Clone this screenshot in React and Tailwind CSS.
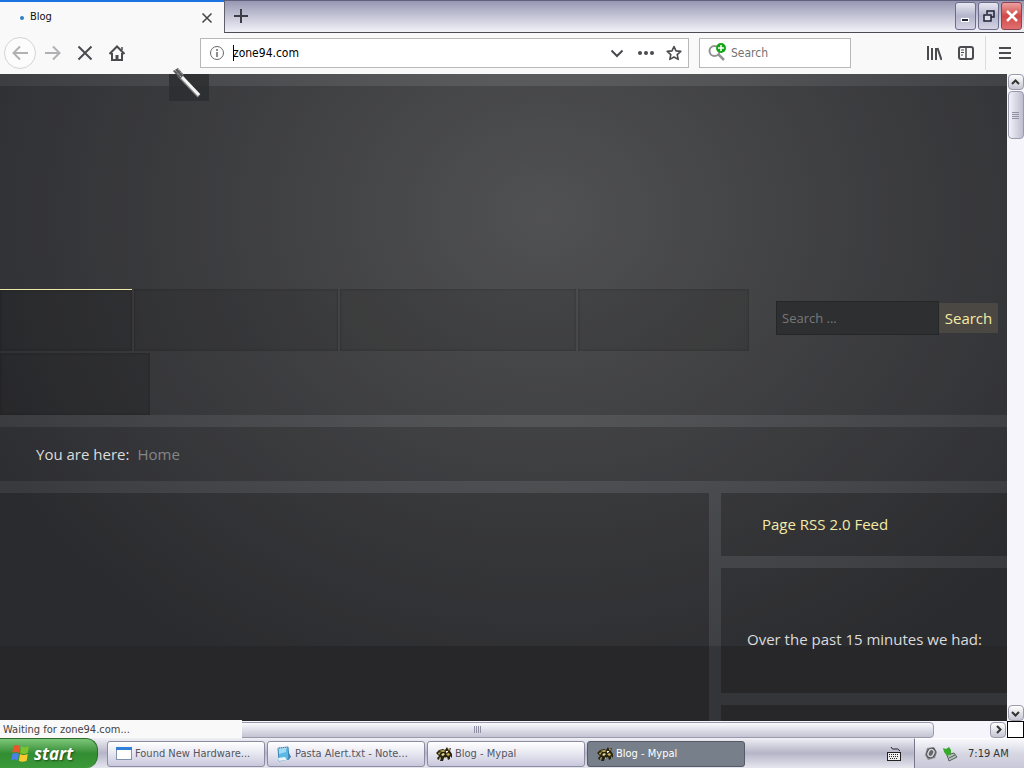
import React from "react";

const navItems = [
  { id: "home", className: "w-[132px] border-t border-[#efe9a8] bg-black/15" },
  { id: "two", className: "w-[204px] bg-black/10" },
  { id: "three", className: "w-[236px] bg-black/10" },
  { id: "four", className: "w-[171px] bg-black/10" },
  { id: "five", className: "w-[150px] bg-black/15" },
];

const tasks = [
  { title: "Found New Hardware...", icon: WindowIcon },
  { title: "Pasta Alert.txt - Note...", icon: NotepadIcon },
  { title: "Blog - Mypal", icon: MypalIcon },
  { title: "Blog - Mypal", icon: MypalIcon, active: true },
];

function WindowIcon() {
  return (
    <svg className="h-4 w-4 shrink-0" viewBox="0 0 16 16">
      <rect x="0.5" y="1.5" width="15" height="12" fill="#fff" stroke="#7f93ad" />
      <rect x="0" y="1" width="16" height="3" fill="#2f7fd8" />
    </svg>
  );
}

function NotepadIcon() {
  return (
    <svg className="h-4 w-4 shrink-0" viewBox="0 0 16 16">
      <path d="M11 3l4 8-3 3z" fill="#4a78a8" />
      <path d="M2 2l10-1 1 12-10 2z" fill="#5cb8e4" stroke="#3d86b4" />
      <path d="M3 3l7-1v4L3 8z" fill="#9fdcf4" />
      <path d="M2 12l7-1 2 3-8 1z" fill="#e9f4fa" />
      <path d="M2 2h10" stroke="#d8e4ee" strokeDasharray="1 1" />
    </svg>
  );
}

function MypalIcon() {
  return (
    <svg className="h-4 w-4 shrink-0" viewBox="0 0 16 16">
      <path d="M0 7l3-3 4-1 2 1 2-3 1 2 3-1-1 3 2 3v4l-2-2v3l-2 1-1-3-3 1-1 3H4l1-3-3 2-1-2 2-2z" fill="#28240f" />
      <path d="M3 5l4-1 3 1-3 1zM2 7l3-1-2 3zM12 3l2 0-1 2zM10 8l3-1 1 2-2 1z" fill="#c9b35a" />
      <path d="M5 9l2-2 2 1-2 2zM3 12l2-1-1 2zM8 12l1-1v2z" fill="#e6d99a" />
      <path d="M10 5l2 0 0 1-2 1z" fill="#fff" />
    </svg>
  );
}

function WindowsFlag() {
  return (
    <svg className="h-5 w-5" viewBox="0 0 18 18">
      <path d="M3 2q3-2 6 0L8 8Q5 6 2 8z" fill="#e8562a" />
      <path d="M10 2q3 2 7 0l-1 6q-4 2-7 0z" fill="#7cc22c" />
      <path d="M2 9q3-2 6 0l-1 6q-3-2-6 0z" fill="#4a82e4" />
      <path d="M9 9q3 2 7 0l-1 6q-4 2-7 0z" fill="#f8ca30" />
    </svg>
  );
}

function Chevron({ d }) {
  return (
    <svg className="h-[9px] w-[9px]" viewBox="0 0 9 9" fill="none" stroke="#333" strokeWidth="2">
      <path d={d} />
    </svg>
  );
}

function ScrollButton({ label, d }) {
  return (
    <button
      aria-label={label}
      className="flex h-4 w-4 shrink-0 items-center justify-center rounded-sm border border-[#9a9aaa] bg-linear-to-b from-white to-[#c6c6d4]"
    >
      <Chevron d={d} />
    </button>
  );
}

function WindowButton({ label, className, children }) {
  return (
    <button
      aria-label={label}
      className={`flex h-7 w-[21px] items-center justify-center rounded-[3px] border ${className}`}
    >
      <svg className="h-4 w-4" viewBox="0 0 16 16" fill="none">
        {children}
      </svg>
    </button>
  );
}

function TabStrip() {
  return (
    <div className="flex h-[33px] shrink-0 bg-linear-to-b from-[#9494b0] via-[#c6c6d8] to-[#f4f4fa]">
      <div className="flex w-[224px] items-center border-t-2 border-[#1a73e0] bg-[#f9f9fa] pr-[11px] pl-5">
        <span className="h-1 w-1 rounded-full bg-[#2f7fc4]" />
        <span className="ml-[6px] flex-1 text-[11px] text-[#111]">Blog</span>
        <button aria-label="Close tab">
          <svg className="h-3 w-3" viewBox="0 0 12 12" stroke="#444" strokeWidth="1.5">
            <path d="M1.5 1.5l9 9M10.5 1.5l-9 9" />
          </svg>
        </button>
      </div>
      <div className="flex flex-1 justify-between border-t border-b border-l border-t-[#60607f] border-b-[#4c4c54] border-l-[#60606c]">
        <button aria-label="New tab" className="flex w-8 items-center justify-center pb-[2px]">
          <svg className="h-[14px] w-[14px]" viewBox="0 0 14 14" stroke="#3c3c44" strokeWidth="2">
            <path d="M7 0v14M0 7h14" />
          </svg>
        </button>
        <div className="flex gap-[2px] pt-px pr-[2px]">
          <WindowButton label="Minimize" className="border-[#6c6c8c] bg-linear-to-b from-[#e8e8f2] via-[#b4b4cc] to-[#d4d4e4]">
            <path d="M3 12h8" stroke="#fff" strokeWidth="4" />
            <path d="M4 12h6" stroke="#222236" strokeWidth="2" />
          </WindowButton>
          <WindowButton label="Restore" className="border-[#6c6c8c] bg-linear-to-b from-[#e8e8f2] via-[#b4b4cc] to-[#d4d4e4]">
            <path d="M6 6V3h7v6h-3" stroke="#222236" strokeWidth="1.5" />
            <path d="M3 7h7v6H3z" fill="#dedeec" stroke="#222236" strokeWidth="1.5" />
          </WindowButton>
          <WindowButton label="Close" className="border-[#8c4450] bg-linear-to-b from-[#eaa0a0] via-[#d04848] to-[#e07070]">
            <path d="M3 3l10 10M13 3L3 13" stroke="#fff" strokeWidth="2.5" />
          </WindowButton>
        </div>
      </div>
    </div>
  );
}

function ToolbarIcon({ label, children, className = "" }) {
  return (
    <button aria-label={label} className={`flex shrink-0 items-center justify-center ${className}`}>
      <svg className="h-4 w-4" viewBox="0 0 16 16" fill="none" stroke="#4a4a4f" strokeWidth="2">
        {children}
      </svg>
    </button>
  );
}

function Toolbar() {
  return (
    <div className="flex h-[41px] shrink-0 items-center bg-[#f9f9fa] pb-[2px]">
      <div className="flex w-[200px] items-center pl-1">
        <button
          aria-label="Back"
          className="flex h-8 w-8 items-center justify-center rounded-full border border-[#d4d4d6] bg-[#fcfcfc]"
        >
          <svg className="h-4 w-4" viewBox="0 0 16 16" fill="none" stroke="#b1b1b3" strokeWidth="2">
            <path d="M16 8H2M8 1.5L1.5 8 8 14.5" />
          </svg>
        </button>
        <button aria-label="Forward" className="ml-[9px]">
          <svg className="h-4 w-4" viewBox="0 0 16 16" fill="none" stroke="#b1b1b3" strokeWidth="2">
            <path d="M0 8h14M8 1.5L14.5 8 8 14.5" />
          </svg>
        </button>
        <ToolbarIcon label="Stop" className="ml-4">
          <path d="M1.5 1.5l13 13M14.5 1.5l-13 13" />
        </ToolbarIcon>
        <ToolbarIcon label="Home" className="ml-4">
          <path d="M0.5 9L8 1.5 15.5 9" />
          <path d="M3 8v7h10V8" />
          <path d="M8 15v-5" strokeWidth="3" />
          <path d="M13 5V2" strokeWidth="1.5" />
        </ToolbarIcon>
      </div>

      <div className="flex h-[30px] flex-1 items-center border border-[#b8b8ba] bg-white pr-[6px] pl-2">
        <svg className="h-4 w-4 shrink-0" viewBox="0 0 16 16" fill="none" stroke="#68686c">
          <circle cx="8" cy="8" r="6.5" />
          <path d="M8 7v5M8 4v2" strokeWidth="1.5" />
        </svg>
        <div className="relative ml-2 flex min-w-0 flex-1">
          <span className="absolute top-0 left-0 h-4 w-px bg-black" />
          <input
            aria-label="Address"
            type="text"
            defaultValue="zone94.com"
            className="h-4 w-full bg-transparent text-[12px] text-black outline-none"
          />
        </div>
        <ToolbarIcon label="Show history">
          <path d="M2.5 5.5L8 11l5.5-5.5" />
        </ToolbarIcon>
        <ToolbarIcon label="Page actions" className="ml-[13px]">
          <g fill="#4a4a4f" stroke="none">
            <circle cx="2" cy="8" r="2" />
            <circle cx="8" cy="8" r="2" />
            <circle cx="14" cy="8" r="2" />
          </g>
        </ToolbarIcon>
        <ToolbarIcon label="Bookmark" className="ml-3">
          <path
            d="M8 1.5l2 4.4 4.8.5-3.6 3.2 1 4.8L8 12l-4.2 2.4 1-4.8L1.2 6.4l4.8-.5z"
            strokeWidth="1.6"
            strokeLinejoin="round"
          />
        </ToolbarIcon>
      </div>

      <div className="ml-[10px] flex h-[30px] w-[152px] items-center border border-[#b8b8ba] bg-white pl-2">
        <svg className="h-5 w-5 shrink-0" viewBox="0 0 20 20" fill="none">
          <circle cx="6.5" cy="8" r="5" stroke="#929292" strokeWidth="2" />
          <path d="M10 11l6 6" stroke="#929292" strokeWidth="2.5" />
          <circle cx="13" cy="5" r="5" fill="#14a514" />
          <path d="M13 2v6M10 5h6" stroke="#fff" strokeWidth="1.5" />
        </svg>
        <input
          aria-label="Search the web"
          type="text"
          placeholder="Search"
          className="ml-[3px] w-full min-w-0 bg-transparent text-[12px] outline-none placeholder:text-[#737373]"
        />
      </div>

      <div className="flex w-[173px] items-center justify-end pr-[11px]">
        <ToolbarIcon label="Library">
          <path d="M2 1v14M6 3v12M10 3v12M11.5 3l4 12" />
        </ToolbarIcon>
        <ToolbarIcon label="Sidebars" className="ml-4">
          <rect x="1" y="2" width="14" height="12" rx="2" />
          <path d="M8 2v12" strokeWidth="1.5" />
          <path d="M3 5h3M3 7.5h3M3 10h2" strokeWidth="1" />
        </ToolbarIcon>
        <span className="ml-[11px] h-[34px] w-px bg-[#dcdcde]" />
        <ToolbarIcon label="Menu" className="ml-[11px]">
          <path d="M2 3h12M2 8h12M2 13h12" />
        </ToolbarIcon>
      </div>
    </div>
  );
}

function BlogPage() {
  return (
    <div
      className="flex min-w-0 flex-1 flex-col gap-3 overflow-hidden bg-[#343539] bg-[radial-gradient(ellipse_620px_520px_at_54%_140px,#656668_0%,#57585a_30%,#4b4c4f_56%,#404145_84%,#393a3e_100%)] bg-[length:100%_572px] bg-no-repeat pt-3 text-[15px] text-[#dcdcdc]"
      style={{ fontFamily: '"Open Sans", "Noto Sans", sans-serif' }}
    >
      <header className="flex h-[329px] shrink-0 items-start bg-black/20 pt-[203px]">
        <nav className="flex min-w-0 flex-1 flex-wrap gap-[2px]">
          {navItems.map((item) => (
            <a
              key={item.id}
              href={`#${item.id}`}
              aria-label={item.id}
              className={`h-[62px] shadow-[inset_0_0_3px_rgba(0,0,0,0.25)] ${item.className}`}
            />
          ))}
        </nav>
        <form className="mt-3 mr-[9px] ml-[27px] flex w-[222px] items-center">
          <input
            aria-label="Search"
            type="search"
            placeholder="Search ..."
            className="h-[34px] min-w-0 flex-1 border border-[#252628] bg-[#2e2f31] px-[5px] text-[13px] outline-none placeholder:text-[#77787a]"
          />
          <button type="button" className="h-[30px] w-[59px] bg-[#4b4844] text-[#f5eba6]">
            Search
          </button>
        </form>
      </header>

      <div className="flex h-[54px] shrink-0 items-center gap-2 bg-black/20 pl-9">
        <span>You are here:</span>
        <a href="#home" className="text-[#858688]">Home</a>
      </div>

      <div className="flex min-h-0 flex-1 gap-3">
        <main className="flex-1 bg-black/25" />
        <aside className="flex w-[286px] flex-col gap-3">
          <section className="flex h-[63px] shrink-0 items-center bg-black/25 pl-[41px]">
            <a href="#rss" className="text-[#f3eaa8]">Page RSS 2.0 Feed</a>
          </section>
          <section className="h-[125px] shrink-0 bg-black/25 pt-[60px] pl-[26px]">
            <p className="leading-[22px] whitespace-nowrap">Over the past 15 minutes we had:</p>
          </section>
          <section className="flex-1 bg-black/25" />
        </aside>
      </div>
    </div>
  );
}

function VerticalScrollbar() {
  return (
    <div className="flex w-[17px] shrink-0 flex-col items-center justify-between bg-[#f5f5fb]">
      <div className="flex flex-col gap-px">
        <ScrollButton label="Scroll up" d="M1 6l3.5-3.5L8 6" />
        <div className="flex h-12 w-4 flex-col items-center justify-center gap-px rounded-sm border border-[#9a9aac] bg-linear-to-r from-[#f2f2fa] to-[#bdbdcf]">
          <span className="h-px w-[7px] bg-[#9090a4]" />
          <span className="h-px w-[7px] bg-[#9090a4]" />
          <span className="h-px w-[7px] bg-[#9090a4]" />
          <span className="h-px w-[7px] bg-[#9090a4]" />
        </div>
      </div>
      <ScrollButton label="Scroll down" d="M1 3l3.5 3.5L8 3" />
    </div>
  );
}

function HorizontalScrollbar() {
  return (
    <div className="relative flex h-[17px] shrink-0 items-center bg-[#f5f5fb]">
      <div className="mr-14 flex h-4 flex-1 items-center justify-center gap-px rounded-sm border border-[#9a9aac] bg-linear-to-b from-[#fafaff] to-[#c3c3d3] pl-5">
        <span className="h-[7px] w-px bg-[#9090a4]" />
        <span className="h-[7px] w-px bg-[#9090a4]" />
        <span className="h-[7px] w-px bg-[#9090a4]" />
        <span className="h-[7px] w-px bg-[#9090a4]" />
      </div>
      <ScrollButton label="Scroll right" d="M3 1l3.5 3.5L3 8" />
      <span className="ml-px h-[17px] w-[17px] border border-black bg-white" />
      <div className="absolute bottom-0 left-0 flex h-[18px] w-[242px] items-center bg-[#f9f9fa] pt-[2px] pl-[3px] text-[11px] text-[#444]">
        Waiting for zone94.com...
      </div>
    </div>
  );
}

function Taskbar() {
  return (
    <div className="flex h-[30px] shrink-0 bg-linear-to-b from-[#f0f0f6] via-[#b5b5c8] to-[#e6e6ee]">
      <button
        className="flex w-[98px] items-center gap-1 rounded-r-xl border-t border-r border-[#2d6c2c] bg-linear-to-b from-[#7cc67a] via-[#338d32] to-[#3c9a3a] pl-[10px] text-[17px] font-bold text-white italic [text-shadow:1px_1px_2px_#1c4a1b]"
        style={{ fontFamily: '"Open Sans", "Noto Sans", sans-serif' }}
      >
        <WindowsFlag />
        start
      </button>
      <div className="ml-[9px] flex flex-1 items-center gap-[2px] pt-px">
        {tasks.map((task, i) => (
          <button
            key={i}
            className={`flex h-[26px] w-[158px] items-center gap-[3px] rounded-[3px] border pt-px pr-1 text-[11px] whitespace-nowrap ${
              task.active
                ? "border-[#555a66] bg-[#77808a] pl-[9px] text-white"
                : "border-[#8c8ca4] bg-linear-to-b from-white via-[#e6e6f0] to-[#c8c8dc] pl-2 text-[#555560]"
            }`}
          >
            <task.icon />
            {task.title}
          </button>
        ))}
      </div>
      <svg className="mt-2 mr-3 h-4 w-4" viewBox="0 0 16 16" fill="none" stroke="#222">
        <path d="M5 1q1 3 4 2t5 2" />
        <rect x="1.5" y="6.5" width="13" height="8" fill="#eee" />
        <path d="M3 8.5h10M3 10.5h10M4 12.5h8" strokeDasharray="1 1" />
      </svg>
      <div className="flex w-[110px] items-center gap-[3px] border-t border-l border-t-white border-l-[#77778c] bg-linear-to-b from-[#f8f8fc] via-[#d8d8e4] to-[#c8c8d8] pl-2 text-[11px] text-[#333]">
        <svg className="h-4 w-4" viewBox="0 0 16 16">
          <path d="M4 2l7-1 3 5-2 6-7 2-3-5z" fill="#88898e" />
          <ellipse cx="8" cy="7" rx="4" ry="5" fill="#d6d6da" stroke="#44454a" transform="rotate(25 8 7)" />
          <ellipse cx="8" cy="7" rx="2" ry="3" fill="#66676c" transform="rotate(25 8 7)" />
        </svg>
        <svg className="h-4 w-4" viewBox="0 0 16 16">
          <path d="M5 9l7-2 3 4-8 4z" fill="#b4c0bc" stroke="#55605c" />
          <path d="M7 12l6-3" stroke="#55605c" />
          <path d="M1 2l3 1 3-2 2 3v4l-4 2-3-4z" fill="#38a92c" />
        </svg>
        <span className="ml-[7px] pt-px">7:19 AM</span>
      </div>
    </div>
  );
}

function BrushCursor() {
  return (
    <div className="pointer-events-none absolute top-[66px] left-[169px] h-[35px] w-10">
      <div className="mt-2 h-[27px] bg-[#2c2e30]/85" />
      <svg className="absolute inset-0 h-[35px] w-10" viewBox="0 0 40 35" fill="none">
        <path d="M10 9L30 30" stroke="#88898b" strokeWidth="4" />
        <path d="M12 10L30 29" stroke="#f4f4f4" strokeWidth="3" />
        <path d="M4 5l5-3 6 7-4 4z" fill="#58595b" />
        <path d="M6 4l6 7M9 3l5 6" stroke="#ddd" strokeDasharray="1 1" />
      </svg>
    </div>
  );
}

export default function App() {
  return (
    <div
      className="relative flex h-screen flex-col overflow-hidden bg-white"
      style={{ fontFamily: '"DejaVu Sans Condensed", "Noto Sans", sans-serif' }}
    >
      <TabStrip />
      <Toolbar />
      <div className="flex min-h-0 flex-1">
        <BlogPage />
        <VerticalScrollbar />
      </div>
      <HorizontalScrollbar />
      <Taskbar />
      <BrushCursor />
    </div>
  );
}
